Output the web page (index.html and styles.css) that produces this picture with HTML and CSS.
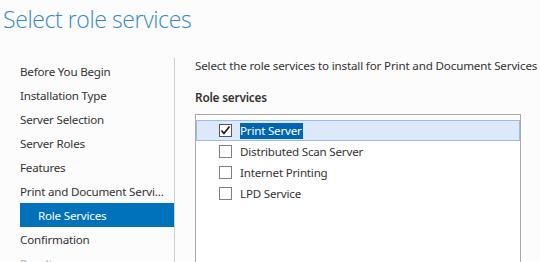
FILE: index.html
```html
<!DOCTYPE html>
<html>
<head>
<meta charset="utf-8">
<link rel="stylesheet" href="styles.css">
</head>
<body>
<div class="page">
  <header class="header">
    <h1 class="title">Select role services</h1>
  </header>
  <div class="main">
    <nav class="nav">
      <div class="nav-item">Before You Begin</div>
      <div class="nav-item">Installation Type</div>
      <div class="nav-item">Server Selection</div>
      <div class="nav-item">Server Roles</div>
      <div class="nav-item">Features</div>
      <div class="nav-item">Print and Document Services</div>
      <div class="nav-item nav-sub active">Role Services</div>
      <div class="nav-item">Confirmation</div>
      <div class="nav-item disabled">Results</div>
    </nav>
    <section class="content">
      <p class="intro">Select the role services to install for Print and Document Services</p>
      <h2 class="label">Role services</h2>
      <div class="list">
        <div class="row selected">
          <span class="check checked"><svg width="11" height="11" viewBox="0 0 11 11"><path d="M1.5 5.5 L4 8.5 L9.5 1.5" fill="none" stroke="#1a1a1a" stroke-width="1.7"/></svg></span>
          <span class="text hl">Print Server</span>
        </div>
        <div class="row">
          <span class="check"></span>
          <span class="text">Distributed Scan Server</span>
        </div>
        <div class="row">
          <span class="check"></span>
          <span class="text">Internet Printing</span>
        </div>
        <div class="row">
          <span class="check"></span>
          <span class="text">LPD Service</span>
        </div>
      </div>
    </section>
  </div>
</div>
</body>
</html>
```
FILE: styles.css
```css
html, body {
  margin: 0;
  padding: 0;
  background: #fcfcfc;
  overflow: hidden;
}
.page {
  width: 540px;
  height: 262px;
  overflow: hidden;
  font-family: "Noto Sans", "Open Sans", sans-serif;
  font-size: 11.6px;
  letter-spacing: -0.2px;
  color: #333333;
}
.header {
  height: 58px;
  padding-left: 3px;
}
.title {
  margin: 0;
  padding-top: 4px;
  font-family: "Open Sans", "Noto Sans", sans-serif;
  font-weight: 300;
  font-size: 23px;
  line-height: 30px;
  color: #3389c4;
  letter-spacing: -0.4px;
}
.main {
  display: flex;
  height: 204px;
}
.nav {
  width: 174px;
  border-right: 1px solid #cfcfcf;
  flex: none;
  padding-top: 1px;
}
.nav-item {
  height: 24px;
  line-height: 25px;
  padding-left: 20px;
  padding-right: 5px;
  white-space: nowrap;
  overflow: hidden;
  text-overflow: ellipsis;
  color: #333333;
}
.nav-sub {
  padding-left: 18px;
  margin-left: 20px;
}
.active {
  background: #0072bc;
  color: #ffffff;
}
.disabled {
  color: #b5b5b5;
}
.content {
  flex: 1;
  padding-left: 20px;
}
.intro {
  margin: 0;
  line-height: 16px;
  white-space: nowrap;
  letter-spacing: -0.15px;
}
.label {
  margin: 15px 0 0 0;
  font-size: 11.8px;
  font-weight: 600;
  line-height: 16px;
  color: #333333;
}
.list {
  margin-top: 9px;
  width: 324px;
  height: 200px;
  border: 1px solid #a9a9a9;
  background: #ffffff;
  padding-top: 5px;
}
.row {
  display: flex;
  align-items: center;
  height: 21px;
  padding-left: 23px;
  box-sizing: border-box;
}
.row.selected {
  background: #dbe9fb;
  border: 1px solid #9cbde6;
  padding-left: 22px;
}
.check {
  width: 11px;
  height: 11px;
  border: 1px solid #808080;
  background: #ffffff;
  display: flex;
  align-items: center;
  justify-content: center;
  flex: none;
}
.check.checked {
  border-color: #555555;
}
.text {
  margin-left: 8px;
  line-height: 16px;
  color: #333333;
  white-space: nowrap;
}
.text.hl {
  background: #0066b4;
  color: #ffffff;
  padding-right: 1px;
}
```
